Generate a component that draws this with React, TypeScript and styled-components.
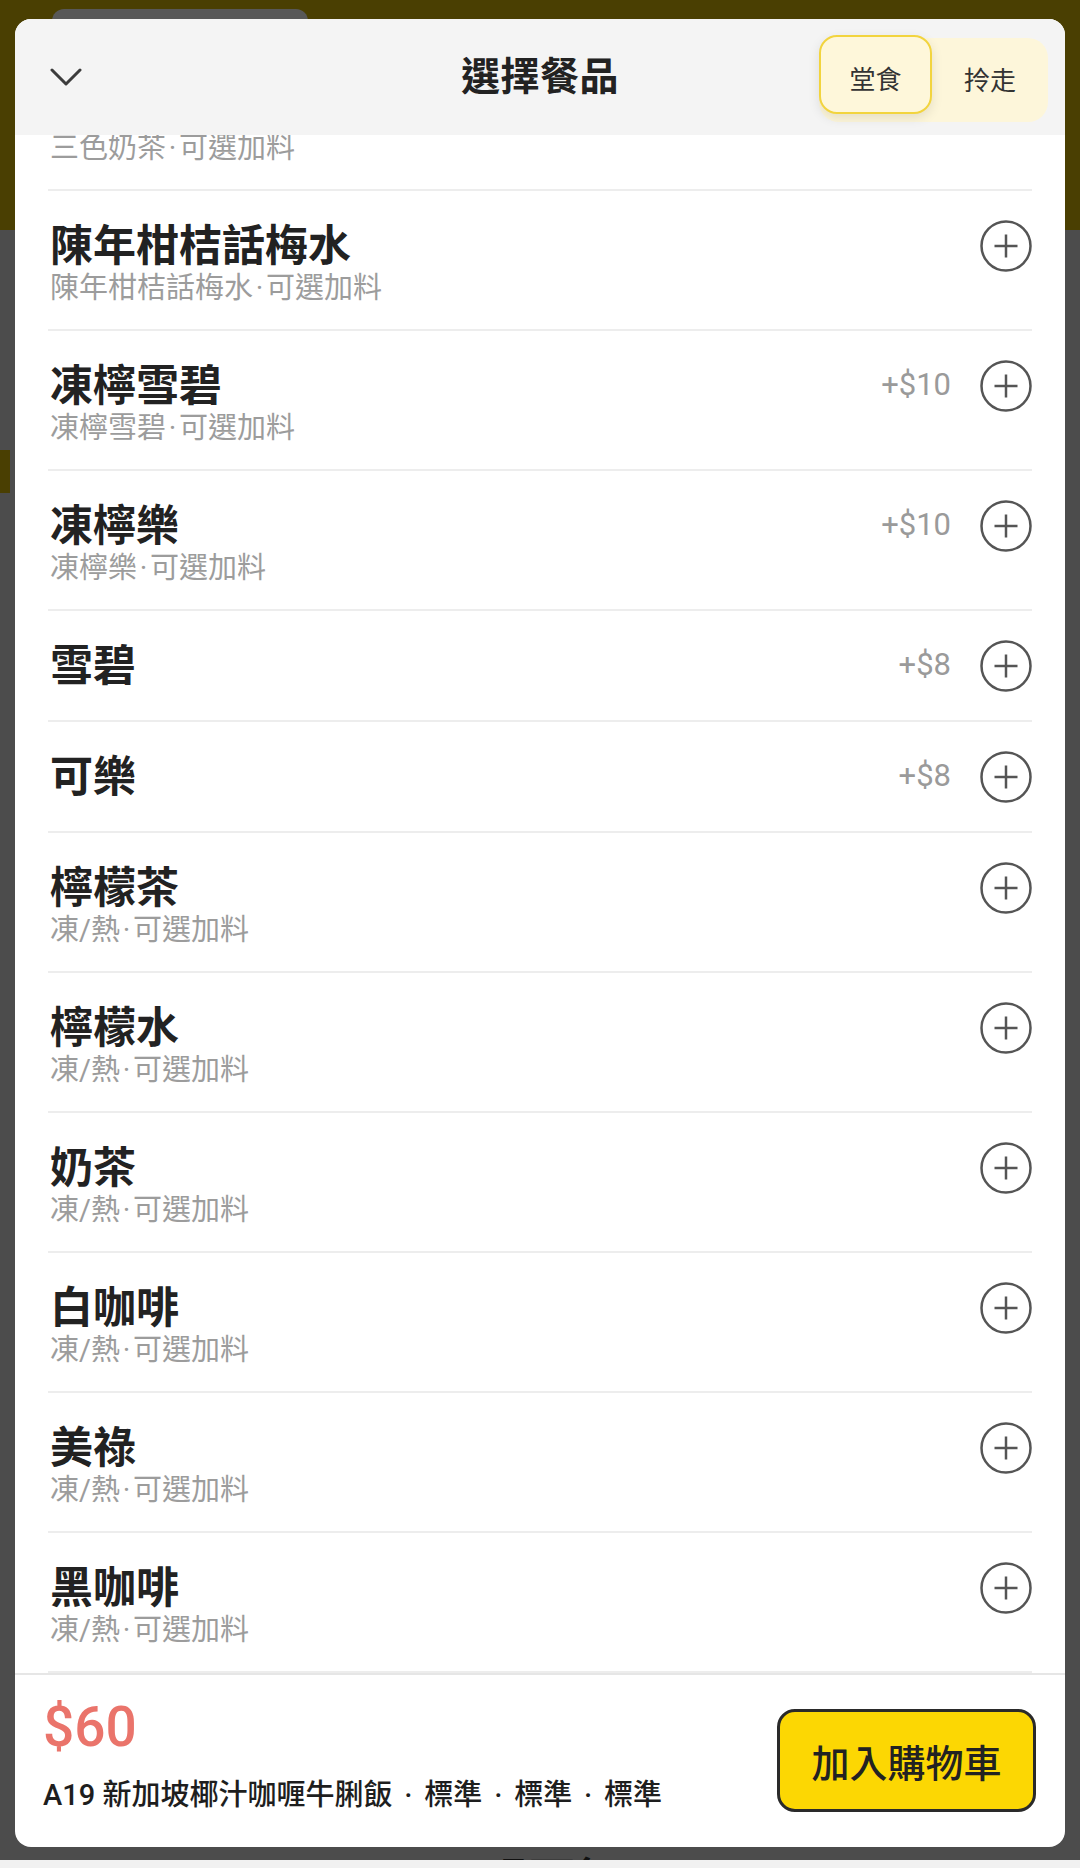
import React from "react";
import styled, { createGlobalStyle } from "styled-components";

const GlobalStyle = createGlobalStyle`
  html, body { margin: 0; padding: 0; }
  body {
    font-family: "Roboto", "Noto Sans CJK TC", sans-serif;
    background: #4c4c4c;
  }
  * { box-sizing: border-box; }
`;

const Page = styled.div`
  position: relative;
  width: 1080px;
  height: 1868px;
  overflow: hidden;
  display: flex;
  flex-direction: column;
  background: #4c4c4c;
`;

const BackdropHeader = styled.div`
  position: relative;
  flex-shrink: 0;
  height: 230px;
  background: #4a3f02;
`;

const BackdropHandle = styled.div`
  position: absolute;
  left: 52px;
  top: 9px;
  width: 256px;
  height: 40px;
  border-radius: 12px;
  background: #585858;
`;

const BackdropBody = styled.div`
  position: relative;
  flex: 1;
  overflow: hidden;
  display: flex;
  flex-direction: column;
  justify-content: flex-end;
  align-items: center;
`;

const SideTab = styled.div`
  position: absolute;
  left: 0;
  top: 220px;
  width: 10px;
  height: 43px;
  background: #4a3f02;
`;

const BackdropTitle = styled.div`
  font-family: "Noto Sans CJK TC", sans-serif;
  font-weight: 700;
  font-size: 46px;
  line-height: 52px;
  height: 52px;
  margin-bottom: -42px;
  padding-left: 24px;
  color: #111;
`;

const BottomBar = styled.div`
  flex-shrink: 0;
  height: 8px;
  background: #f1f1f1;
`;

const Modal = styled.div`
  position: absolute;
  left: 15px;
  top: 19px;
  width: 1050px;
  height: 1828px;
  border-radius: 16px;
  background: #ffffff;
  overflow: hidden;
  display: flex;
  flex-direction: column;
`;

const Header = styled.div`
  position: relative;
  z-index: 1;
  flex-shrink: 0;
  height: 116px;
  background: #f4f4f4;
  display: grid;
  grid-template-columns: 1fr auto 1fr;
  align-items: center;
  padding: 0 17px;
`;

const CloseButton = styled.button`
  justify-self: start;
  margin-left: 18px;
  width: 32px;
  height: 22px;
  padding: 0;
  border: none;
  background: transparent;
  display: flex;
  align-items: center;
  justify-content: center;
`;

const Title = styled.h1`
  margin: 0 0 7px;
  font-family: "Noto Sans CJK TC", sans-serif;
  font-weight: 700;
  font-size: 39px;
  line-height: 1;
  color: #222;
  letter-spacing: 0.5px;
`;

const Segmented = styled.div`
  justify-self: end;
  margin-top: 6px;
  height: 84px;
  display: flex;
  align-items: flex-start;
  border-radius: 20px;
  background: #fdf6da;
`;

const SegButton = styled.button<{ $active?: boolean }>`
  width: ${(p) => (p.$active ? "113px" : "116px")};
  height: ${(p) => (p.$active ? "79px" : "84px")};
  margin-top: ${(p) => (p.$active ? "-3px" : "0")};
  padding: ${(p) => (p.$active ? "5px 0 0" : "0 0 4px")};
  border: 2px solid ${(p) => (p.$active ? "#f2d43e" : "transparent")};
  border-radius: 18px;
  background: ${(p) => (p.$active ? "#fef7da" : "transparent")};
  box-shadow: ${(p) => (p.$active ? "0 4px 12px rgba(0,0,0,0.10)" : "none")};
  font-family: "Noto Sans CJK TC", sans-serif;
  font-size: 26px;
  color: #333;
  display: flex;
  align-items: center;
  justify-content: center;
`;

const List = styled.div`
  flex: 1;
  overflow: hidden;
  padding: 0 33px;
`;

const ListInner = styled.div`
  margin-top: -84px;
`;

const Row = styled.div`
  min-height: 111px;
  display: flex;
  align-items: flex-start;
  justify-content: space-between;
  padding: 26px 0 21px;
  border-bottom: 2px solid #ededed;
`;

const TextBlock = styled.div`
  display: flex;
  flex-direction: column;
  padding-left: 2px;
`;

const ItemTitle = styled.div`
  font-family: "Noto Sans CJK TC", sans-serif;
  font-weight: 700;
  font-size: 43px;
  line-height: 50px;
  color: #222;
`;

const ItemSub = styled.div`
  margin-top: 1px;
  font-family: "Roboto", "Noto Sans CJK TC", sans-serif;
  font-weight: 400;
  font-size: 29px;
  line-height: 40px;
  color: #9c9c9c;
`;

const SubDot = styled.span`
  display: inline-block;
  width: 0.45em;
  text-align: center;
`;

const RightBlock = styled.div`
  height: 50px;
  margin-top: 2px;
  display: flex;
  align-items: center;
  gap: 29px;
`;

const Price = styled.span`
  font-family: "Roboto", sans-serif;
  font-size: 31px;
  color: #9a9a9a;
`;

const AddButton = styled.button`
  width: 52px;
  height: 52px;
  margin-top: 4px;
  padding: 0;
  border: none;
  background: transparent;
  display: flex;
`;

const Footer = styled.div`
  flex-shrink: 0;
  height: 174px;
  border-top: 2px solid #e6e6e6;
  display: flex;
  justify-content: space-between;
  align-items: flex-start;
  padding: 20px 29px 0 28px;
`;

const Summary = styled.div`
  display: flex;
  flex-direction: column;
`;

const Total = styled.div`
  font-family: "Roboto", sans-serif;
  font-weight: 500;
  font-size: 55px;
  line-height: 64px;
  color: #ea746b;
`;

const Desc = styled.div`
  margin-top: 16px;
  font-family: "Roboto", "Noto Sans CJK TC", sans-serif;
  font-weight: 500;
  font-size: 29px;
  line-height: 40px;
  color: #1e1e1e;
`;

const DescDot = styled.span`
  display: inline-block;
  width: 1.1em;
  text-align: center;
`;

const CartButton = styled.button`
  margin-top: 14px;
  width: 259px;
  height: 103px;
  border: 3px solid #2a2a2a;
  border-radius: 18px;
  background: #fcd703;
  font-family: "Noto Sans CJK TC", sans-serif;
  font-weight: 500;
  font-size: 38px;
  color: #222;
  display: flex;
  align-items: center;
  justify-content: center;
  padding: 0;
`;

type Item = { title: string; sub?: string; price?: string };

const items: Item[] = [
  { title: "三色奶茶", sub: "三色奶茶·可選加料" },
  { title: "陳年柑桔話梅水", sub: "陳年柑桔話梅水·可選加料" },
  { title: "凍檸雪碧", sub: "凍檸雪碧·可選加料", price: "+$10" },
  { title: "凍檸樂", sub: "凍檸樂·可選加料", price: "+$10" },
  { title: "雪碧", price: "+$8" },
  { title: "可樂", price: "+$8" },
  { title: "檸檬茶", sub: "凍/熱·可選加料" },
  { title: "檸檬水", sub: "凍/熱·可選加料" },
  { title: "奶茶", sub: "凍/熱·可選加料" },
  { title: "白咖啡", sub: "凍/熱·可選加料" },
  { title: "美祿", sub: "凍/熱·可選加料" },
  { title: "黑咖啡", sub: "凍/熱·可選加料" },
];

function joinDots(text: string, Dot: typeof SubDot) {
  const parts = text.split("·");
  return parts.map((p, i) => (
    <React.Fragment key={i}>
      {i > 0 && <Dot>·</Dot>}
      {p}
    </React.Fragment>
  ));
}

const ChevronIcon = () => (
  <svg width="32" height="20" viewBox="0 0 32 20" fill="none">
    <polyline
      points="2,3 16,17 30,3"
      stroke="#3c3c3c"
      strokeWidth="3"
      strokeLinecap="round"
      strokeLinejoin="round"
    />
  </svg>
);

const PlusCircleIcon = () => (
  <svg width="52" height="52" viewBox="0 0 52 52" fill="none">
    <circle cx="26" cy="26" r="24.5" stroke="#555" strokeWidth="2.5" />
    <line x1="14.5" y1="26" x2="37.5" y2="26" stroke="#555" strokeWidth="2.5" />
    <line x1="26" y1="14.5" x2="26" y2="37.5" stroke="#555" strokeWidth="2.5" />
  </svg>
);

export default function App() {
  return (
    <Page>
      <GlobalStyle />
      <BackdropHeader>
        <BackdropHandle />
      </BackdropHeader>
      <BackdropBody>
        <SideTab />
        <BackdropTitle>咀西飯</BackdropTitle>
      </BackdropBody>
      <BottomBar />

      <Modal>
        <Header>
          <CloseButton aria-label="close">
            <ChevronIcon />
          </CloseButton>
          <Title>選擇餐品</Title>
          <Segmented>
            <SegButton $active>堂食</SegButton>
            <SegButton>拎走</SegButton>
          </Segmented>
        </Header>

        <List>
          <ListInner>
            {items.map((it) => (
              <Row key={it.title}>
                <TextBlock>
                  <ItemTitle>{it.title}</ItemTitle>
                  {it.sub && <ItemSub>{joinDots(it.sub, SubDot)}</ItemSub>}
                </TextBlock>
                <RightBlock>
                  {it.price && <Price>{it.price}</Price>}
                  <AddButton aria-label="add">
                    <PlusCircleIcon />
                  </AddButton>
                </RightBlock>
              </Row>
            ))}
          </ListInner>
        </List>

        <Footer>
          <Summary>
            <Total>$60</Total>
            <Desc>{joinDots("A19 新加坡椰汁咖喱牛脷飯·標準·標準·標準", DescDot)}</Desc>
          </Summary>
          <CartButton>加入購物車</CartButton>
        </Footer>
      </Modal>
    </Page>
  );
}
